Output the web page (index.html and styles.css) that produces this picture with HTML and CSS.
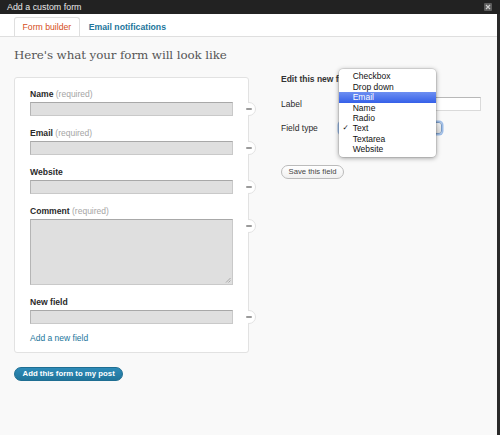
FILE: index.html
```html
<!DOCTYPE html>
<html>
<head>
<meta charset="utf-8">
<title>Add a custom form</title>
<link rel="stylesheet" href="styles.css">
</head>
<body>
<div class="window">
  <div class="titlebar">
    <span class="title">Add a custom form</span>
    <span class="close"><svg width="8" height="8" viewBox="0 0 8 8"><rect width="8" height="8" rx="1" fill="#5c5c5c"/><path d="M2 2L6 6M6 2L2 6" stroke="#cfcfcf" stroke-width="1.2"/></svg></span>
  </div>
  <div class="main">
    <div class="tabs">
      <span class="tab active">Form builder</span>
      <span class="tab">Email notifications</span>
    </div>
    <div class="content">
      <h1>Here's what your form will look like</h1>
      <div class="columns">
        <div class="left">
          <div class="card">
            <div class="field">
              <div class="label"><b>Name</b> <span class="req">(required)</span></div>
              <div class="input"></div>
              <span class="remove"></span>
            </div>
            <div class="field">
              <div class="label"><b>Email</b> <span class="req">(required)</span></div>
              <div class="input"></div>
              <span class="remove"></span>
            </div>
            <div class="field">
              <div class="label"><b>Website</b></div>
              <div class="input"></div>
              <span class="remove"></span>
            </div>
            <div class="field">
              <div class="label"><b>Comment</b> <span class="req">(required)</span></div>
              <div class="input textarea"><svg class="grip" width="6" height="6" viewBox="0 0 6 6"><path d="M5.5 1L1 5.5M5.5 3.5L3.5 5.5" stroke="#999" stroke-width="0.8"/></svg></div>
              <span class="remove"></span>
            </div>
            <div class="field">
              <div class="label"><b>New field</b></div>
              <div class="input"></div>
              <span class="remove"></span>
            </div>
            <a class="add-link">Add a new field</a>
          </div>
          <button class="btn-primary">Add this form to my post</button>
        </div>
        <div class="right">
          <h2>Edit this new field</h2>
          <div class="row"><span class="row-label">Label</span><div class="text-input"></div></div>
          <div class="row"><span class="row-label">Field type</span><div class="select"></div></div>
          <button class="btn-secondary">Save this field</button>
          <ul class="dropdown">
            <li>Checkbox</li>
            <li>Drop down</li>
            <li class="selected">Email</li>
            <li>Name</li>
            <li>Radio</li>
            <li class="checked">Text</li>
            <li>Textarea</li>
            <li>Website</li>
          </ul>
        </div>
      </div>
    </div>
  </div>
</div>
</body>
</html>
```
FILE: styles.css
```css
* { box-sizing: border-box; }
html, body { margin: 0; padding: 0; }
body {
  width: 500px;
  height: 435px;
  overflow: hidden;
  font-family: "Liberation Sans", Arial, sans-serif;
  color: #2a2a2a;
  background: #222;
}
.window { width: 500px; height: 435px; display: flex; flex-direction: column; }
.titlebar {
  height: 14px;
  background: #222;
  display: flex;
  align-items: center;
  justify-content: space-between;
  padding: 0 8px 0 7px;
}
.title { color: #e8e8e8; font-size: 8.9px; line-height: 14px; }
.close { display: flex; margin-top: -1px; }
.main {
  flex: 1;
  display: flex;
  flex-direction: column;
  border-right: 3px solid #2a2a2a;
  background: #f9f9f9;
}
.tabs {
  height: 23px;
  background: #fff;
  border-bottom: 1px solid #dfdfdf;
  padding: 3px 0 0 14px;
  display: flex;
  align-items: flex-end;
}
.tab {
  height: 19px;
  line-height: 18px;
  padding: 0 7px;
  margin-right: 1px;
  font-size: 8.7px;
  font-weight: bold;
  color: #21759b;
  border: 1px solid transparent;
  border-bottom: none;
}
.tab.active {
  color: #d54e21;
  font-weight: normal;
  border-color: #dfdfdf;
  border-radius: 3px 3px 0 0;
  background: #fff;
  padding: 0 7.5px;
}
.content { flex: 1; padding: 10px 0 0 14px; }
h1 {
  margin: 0 0 13px;
  font-family: "DejaVu Serif", Georgia, serif;
  font-weight: normal;
  font-size: 11.9px;
  line-height: 17px;
  letter-spacing: -0.1px;
  color: #555;
}
.columns { display: flex; align-items: flex-start; }
.left { width: 235px; }
.card {
  background: #fff;
  border: 1px solid #e2e2e2;
  border-radius: 3px;
  padding: 11px 15px 8px;
}
.field { position: relative; margin-bottom: 12px; }
.label { font-size: 8.5px; line-height: 11px; margin-bottom: 2px; color: #2a2a2a; }
.label b { font-size: 8.6px; }
.req { color: #a5a5a5; }
.input {
  height: 14px;
  background: #dfdfdf;
  border: 1px solid #c9c9c9;
  border-top-color: #a8a8a8;
  border-left-color: #b5b5b5;
  position: relative;
}
.input.textarea { height: 66px; }
.grip { position: absolute; right: 1px; bottom: 1px; }
.remove {
  position: absolute;
  right: -23px;
  top: 13px;
  width: 14px;
  height: 14px;
  z-index: 2;
}
.remove::before {
  content: "";
  position: absolute;
  inset: 0;
  border-radius: 50%;
  background: #fff;
  border: 1px solid #e2e2e2;
  clip-path: inset(0 0 0 6px);
}
.remove::after {
  content: "";
  position: absolute;
  left: 4px;
  top: 6px;
  width: 6px;
  height: 2px;
  background: #9a9a9a;
  border-radius: 1px;
}
.add-link {
  display: block;
  font-size: 8.5px;
  line-height: 11px;
  color: #21759b;
  margin-top: -3px;
}
.btn-primary {
  margin-top: 14px;
  height: 14px;
  padding: 0 7.5px;
  border: 1px solid #1f6e92;
  border-radius: 8px;
  background: linear-gradient(#2e8bb8, #21759b);
  color: #fff;
  font-family: "Liberation Sans", Arial, sans-serif;
  font-weight: bold;
  font-size: 7.8px;
  line-height: 12px;
  display: block;
}
.right { position: relative; margin: -3px 0 0 32px; width: 200px; }
h2 { margin: 0 0 12px; font-size: 8.5px; line-height: 11px; font-weight: bold; color: #333; }
.row { display: flex; align-items: center; height: 14px; margin-bottom: 10px; font-size: 8.5px; }
.row-label { width: 58px; color: #2a2a2a; }
.text-input {
  width: 142px;
  height: 14px;
  background: #fff;
  border: 1px solid #dadada;
  border-top-color: #b8b8b8;
}
.select {
  width: 103px;
  height: 12px;
  border: 1px solid #7a9cc6;
  border-radius: 3px;
  background: linear-gradient(#f4f4f4, #dcdcdc);
  box-shadow: 0 0 0 1.5px #9dbde8;
}
.btn-secondary {
  display: block;
  margin-top: 30px;
  height: 13.5px;
  width: 63px;
  padding: 0;
  border: 1px solid #bbb;
  border-radius: 8px;
  background: linear-gradient(#fff, #f0f0f0);
  color: #464646;
  font-family: "Liberation Sans", Arial, sans-serif;
  font-size: 7.7px;
  line-height: 11px;
}
.dropdown {
  position: absolute;
  left: 58px;
  top: -4.7px;
  width: 97px;
  margin: 0;
  padding: 2px 0 2.4px;
  list-style: none;
  background: #fff;
  border-radius: 4px;
  box-shadow: 0 1px 5px rgba(0,0,0,0.4), 0 0 0 0.5px rgba(0,0,0,0.15);
  z-index: 5;
}
.dropdown li {
  font-size: 8.5px;
  line-height: 10.43px;
  height: 10.43px;
  padding-left: 13.7px;
  color: #111;
  position: relative;
}
.dropdown li.selected {
  background: linear-gradient(#6d8ff2, #3560e8);
  color: #fff;
}
.dropdown li.checked::before {
  content: "\2713";
  position: absolute;
  left: 3.5px;
  top: 0;
  font-family: "DejaVu Sans", sans-serif;
  font-size: 7.5px;
}
```
